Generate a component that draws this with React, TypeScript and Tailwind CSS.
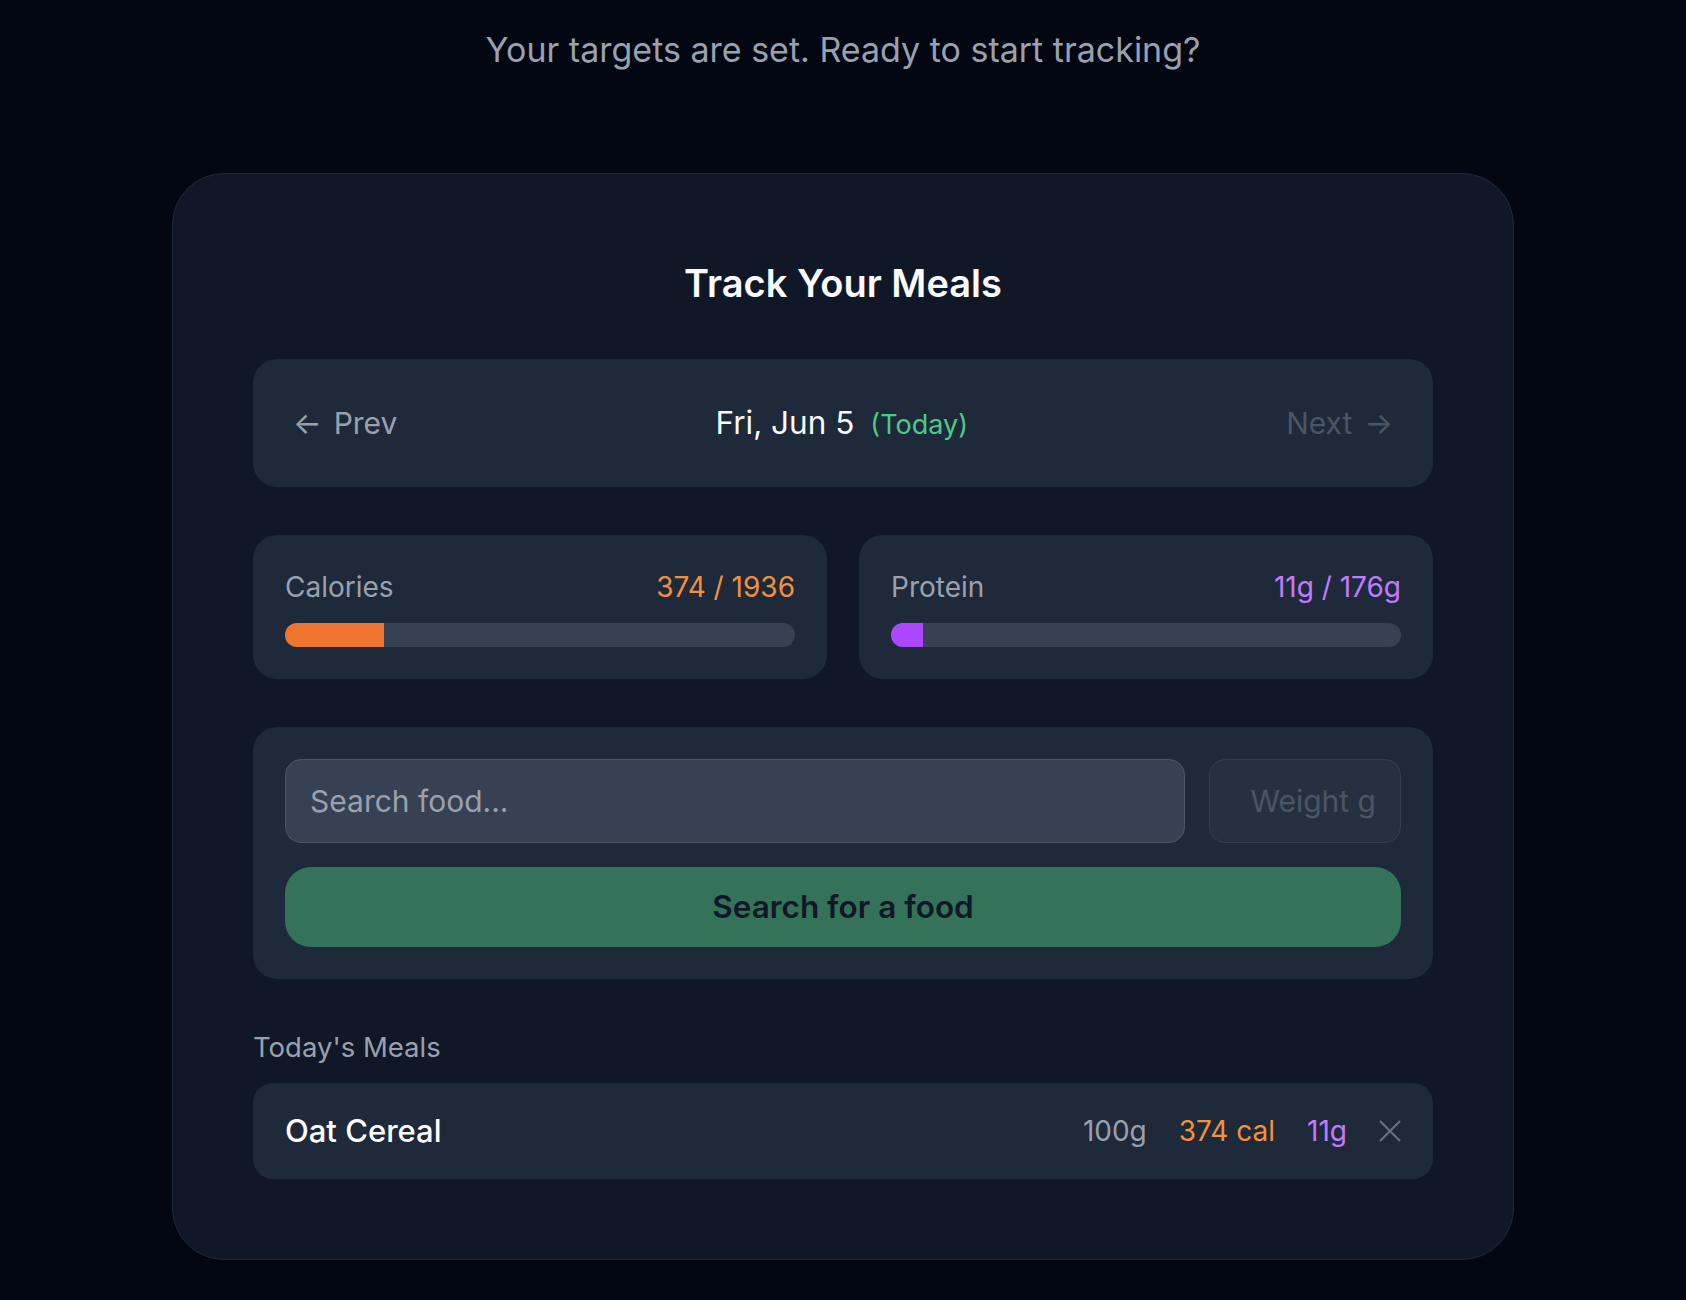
import React from "react";

const macros = {
  calories: { eaten: 374, target: 1936 },
  protein: { eaten: 11, target: 176 },
};

const meals = [{ id: "m1", name: "Oat Cereal", weight: 100, calories: 374, protein: 11 }];

function ProgressCard({
  label,
  value,
  pct,
  valueClass,
  barClass,
}: {
  label: string;
  value: string;
  pct: number;
  valueClass: string;
  barClass: string;
}) {
  return (
    <div className="rounded-3xl bg-gray-800 p-8">
      <div className="mb-4 flex items-center justify-between text-[28px] leading-10">
        <span className="text-gray-400">{label}</span>
        <span className={valueClass}>{value}</span>
      </div>
      <div className="h-6 w-full overflow-hidden rounded-full bg-gray-700">
        <div className={`h-full ${barClass}`} style={{ width: `${pct}%` }} />
      </div>
    </div>
  );
}

export default function App() {
  const calPct = (macros.calories.eaten / macros.calories.target) * 100;
  const proPct = (macros.protein.eaten / macros.protein.target) * 100;

  return (
    <div className="min-h-screen bg-gray-950 pt-[30px] pb-10 font-['Inter','Noto_Sans',sans-serif]">
      <p className="text-center text-[34px] leading-10 text-gray-400">
        Your targets are set. Ready to start tracking?
      </p>

      <div className="mx-auto mt-[103px] w-[1342px] rounded-[52px] border border-gray-800 bg-gray-900 px-20 pt-[89px] pb-20">
        <h2 className="mb-14 text-center text-[38px] leading-10 font-semibold text-gray-50">
          Track Your Meals
        </h2>

        {/* date switcher */}
        <div className="flex h-32 items-center justify-between rounded-3xl bg-gray-800 px-10 text-[30px]">
          <button className="flex items-center gap-3 text-gray-400">
            <span>←</span>
            <span>Prev</span>
          </button>
          <div className="flex items-baseline gap-4">
            <span className="text-[31.5px] text-gray-50">Fri, Jun 5</span>
            <span className="text-[27px] text-[#4ec98c]">(Today)</span>
          </div>
          <button className="flex items-center gap-3 text-gray-600" disabled>
            <span>Next</span>
            <span>→</span>
          </button>
        </div>

        <div className="mt-12 grid grid-cols-2 gap-8">
          <ProgressCard
            label="Calories"
            value={`${macros.calories.eaten} / ${macros.calories.target}`}
            pct={calPct}
            valueClass="text-[#f4903c]"
            barClass="bg-[#ee7430]"
          />
          <ProgressCard
            label="Protein"
            value={`${macros.protein.eaten}g / ${macros.protein.target}g`}
            pct={proPct}
            valueClass="text-purple-400"
            barClass="bg-purple-500"
          />
        </div>

        {/* search */}
        <div className="mt-12 rounded-3xl bg-gray-800 p-8">
          <div className="flex gap-6">
            <input
              type="text"
              placeholder="Search food..."
              className="h-[84px] flex-1 rounded-2xl border border-gray-600 bg-gray-700 px-6 text-[30px] text-gray-100 outline-none placeholder:text-gray-400"
            />
            <input
              type="text"
              inputMode="numeric"
              placeholder="Weight g"
              disabled
              className="h-[84px] w-[192px] rounded-2xl border border-[#343e4d] bg-[#273040] px-6 text-right text-[30px] outline-none placeholder:text-gray-600"
            />
          </div>
          <button className="mt-6 h-20 w-full rounded-[26px] bg-[#35725a] text-[31.5px] font-semibold text-gray-900">
            Search for a food
          </button>
        </div>

        <h3 className="mt-12 mb-4 text-[27.5px] leading-10 text-gray-400">Today's Meals</h3>
        {meals.map((meal) => (
          <div
            key={meal.id}
            className="flex h-24 items-center justify-between rounded-[20px] bg-gray-800 px-8"
          >
            <span className="text-[31px] font-medium text-white">{meal.name}</span>
            <div className="flex items-center gap-8 text-[28px]">
              <span className="text-gray-400">{meal.weight}g</span>
              <span className="text-[#f4903c]">{meal.calories} cal</span>
              <span className="text-purple-400">{meal.protein}g</span>
              <button className="text-gray-500">
                <svg width="22" height="22" viewBox="0 0 22 22" fill="none" stroke="currentColor" strokeWidth="2">
                  <path d="M1 1L21 21M21 1L1 21" />
                </svg>
              </button>
            </div>
          </div>
        ))}
      </div>
    </div>
  );
}
